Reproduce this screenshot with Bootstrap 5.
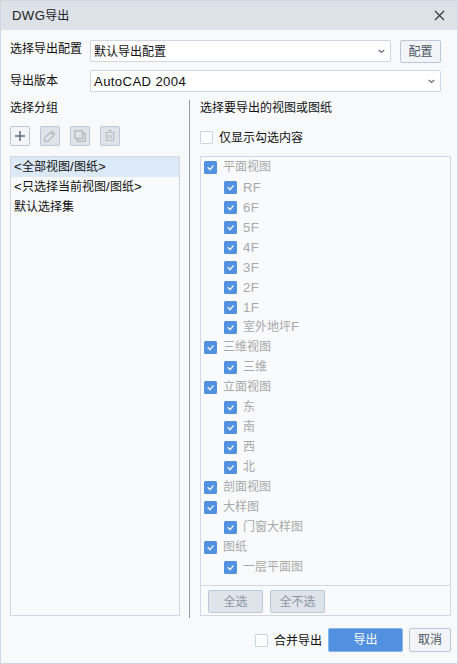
<!DOCTYPE html>
<html lang="zh-CN">
<head>
<meta charset="utf-8">
<title>DWG导出</title>
<link href="https://cdn.jsdelivr.net/npm/bootstrap@5.3.0/dist/css/bootstrap.min.css" rel="stylesheet">
<style>
body{font-family:"Liberation Sans","Noto Sans CJK SC",sans-serif;font-size:12px;line-height:20px;color:#111;background:#f7f9fb}
.dialog{width:458px;height:664px;border:1px solid #d0d6e2;background:#f7f9fb;overflow:hidden}
.titlebar{height:29px;background:#dde1e8;padding:0 12px 0 11px;color:#222}
.title-text{padding-top:1px}
.lt{font-size:13.2px;line-height:1;letter-spacing:.35px}
.body-area{padding:10px 6px 0 9px}
.form-line{height:30px}
.form-label-cell{width:80px;height:22px;line-height:18px}
.line-two .form-label-cell{line-height:22px}
.picker{height:22px;line-height:20px;border:1px solid #d0d6e2;border-radius:2px;background:#fff;padding:0 5px 0 3px}
.picker span{padding-top:1px}
.picker-one{width:301px}
.picker-two{width:351px}
.dlg-btn{--bs-btn-font-size:12px;--bs-btn-line-height:21px;--bs-btn-padding-x:0;--bs-btn-padding-y:0;--bs-btn-border-radius:2px;--bs-btn-color:#4b5563;--bs-btn-bg:#f2f4f8;--bs-btn-border-color:#bcc8da;--bs-btn-disabled-color:#8d96a5;--bs-btn-disabled-bg:#dfe3ea;--bs-btn-disabled-border-color:#bcc8da;--bs-btn-disabled-opacity:1}
.dlg-btn.btn-config,.dlg-btn.btn-all{padding-top:1px}
.dlg-btn.btn-export,.dlg-btn.btn-cancel{padding-top:1px}
.btn-config{width:41px;height:23px;margin-left:9px}
.btn-all{width:55px;height:23px}
.btn-export{width:75px;height:24px;--bs-btn-color:#fff;--bs-btn-bg:#5191df;--bs-btn-border-color:#8ab5ec}
.btn-cancel{width:42px;height:24px}
.tool{width:20px;height:20px}
.toolbar{gap:10px;margin:10px 0}
.left-pane{width:170px}
.divider{width:1px;height:518px;background:#999;margin:0 10px 0 9px}
.right-pane{width:251px}
.heading{height:16px;line-height:17px}
.filter-line{gap:6px;height:20px;margin:11px 0 9px}
.filter-line span+span,.action-line span+span{padding-top:1px}
.boxed{height:460px;border:1px solid #d2d7e3;background:#f8fafc}
.boxed .item{height:20px;line-height:21px;padding-left:3px}
.boxed .item.chosen{background:#dce9f8}
.tick{width:13px;height:13px;border:1px solid #ccd4e0;border-radius:1px;background:#fff;flex:none}
.tick-on{width:13px;height:13px;flex:none;display:block}
.tree{height:428px;color:#a7a9ab}
.tree .item{gap:6px}
.tree .item>span{padding-top:1px}
.tree .child{padding-left:23px}
.tree-foot{border-top:1px solid #d0d6e2;height:30px;padding:4px 7px;gap:7px}
.action-line{gap:6px;margin-top:10px}
</style>
<script src="https://cdn.jsdelivr.net/npm/bootstrap@5.3.0/dist/js/bootstrap.bundle.min.js"></script>
</head>
<body>
<svg class="d-none"><symbol id="on" viewBox="0 0 13 13"><rect width="13" height="13" rx="1.5" fill="#5191df"/><path d="M3.7 6.3 6 8.6 9.5 4.5" fill="none" stroke="#e6f0fb" stroke-width="1.4"/></symbol></svg>
<div class="dialog">
  <div class="titlebar d-flex align-items-center justify-content-between">
    <div class="title-text"><span class="lt">DWG</span>导出</div>
    <svg width="11" height="11" viewBox="0 0 11 11"><path d="M1 1 10 10M10 1 1 10" stroke="#333" stroke-width="1.1"/></svg>
  </div>
  <div class="body-area">
    <div class="form-line d-flex">
      <div class="form-label-cell">选择导出配置</div>
      <div class="picker picker-one d-flex align-items-center justify-content-between"><span>默认导出配置</span><svg width="7" height="5" viewBox="0 0 7 5"><path d="M.7 1 3.5 3.4 6.3 1" fill="none" stroke="#707c8c" stroke-width="1.4"/></svg></div>
      <button class="btn dlg-btn btn-config">配置</button>
    </div>
    <div class="form-line line-two d-flex">
      <div class="form-label-cell">导出版本</div>
      <div class="picker picker-two d-flex align-items-center justify-content-between"><span class="lt">AutoCAD 2004</span><svg width="7" height="5" viewBox="0 0 7 5"><path d="M.7 1 3.5 3.4 6.3 1" fill="none" stroke="#707c8c" stroke-width="1.4"/></svg></div>
    </div>
    <div class="d-flex">
      <div class="left-pane">
        <div class="heading">选择分组</div>
        <div class="toolbar d-flex">
          <button class="btn dlg-btn tool d-flex align-items-center justify-content-center"><svg width="18" height="18" viewBox="0 0 18 18"><path d="M9 4v10M4 9h10" stroke="#5a6b7d" stroke-width="1.5"/></svg></button>
          <button class="btn dlg-btn tool d-flex align-items-center justify-content-center" disabled><svg width="18" height="18" viewBox="0 0 18 18" fill="none" stroke="#b9bdc3" stroke-width="1.3"><path d="M3.7 14.3V11L9.5 5.2 12.8 8.5 7 14.3ZM10.6 3.7 14.3 7.4"/></svg></button>
          <button class="btn dlg-btn tool d-flex align-items-center justify-content-center" disabled><svg width="18" height="18" viewBox="0 0 18 18" fill="none" stroke="#b9bdc3" stroke-width="1.5"><path d="M3.8 3.8h7.7v7.7H3.8zM12 6.5h2.2v7.7H6.5V12"/></svg></button>
          <button class="btn dlg-btn tool d-flex align-items-center justify-content-center" disabled><svg width="18" height="18" viewBox="0 0 18 18" fill="none" stroke="#b9bdc3" stroke-width="1.2"><path d="M4 5.5h10M7 3.6h4M5.3 5.5v8h7.4v-8M7.8 8v3.5M10.2 8v3.5"/></svg></button>
        </div>
        <div class="boxed">
          <div class="item chosen"><span class="lt">&lt;</span>全部视图<span class="lt">/</span>图纸<span class="lt">&gt;</span></div>
          <div class="item"><span class="lt">&lt;</span>只选择当前视图<span class="lt">/</span>图纸<span class="lt">&gt;</span></div>
          <div class="item">默认选择集</div>
        </div>
      </div>
      <div class="divider"></div>
      <div class="right-pane">
        <div class="heading">选择要导出的视图或图纸</div>
        <div class="filter-line d-flex align-items-center"><span class="tick"></span><span>仅显示勾选内容</span></div>
        <div class="boxed">
          <div class="tree">
            <div class="item d-flex align-items-center"><svg class="tick-on"><use href="#on"/></svg><span>平面视图</span></div>
            <div class="item child d-flex align-items-center"><svg class="tick-on"><use href="#on"/></svg><span class="lt">RF</span></div>
            <div class="item child d-flex align-items-center"><svg class="tick-on"><use href="#on"/></svg><span class="lt">6F</span></div>
            <div class="item child d-flex align-items-center"><svg class="tick-on"><use href="#on"/></svg><span class="lt">5F</span></div>
            <div class="item child d-flex align-items-center"><svg class="tick-on"><use href="#on"/></svg><span class="lt">4F</span></div>
            <div class="item child d-flex align-items-center"><svg class="tick-on"><use href="#on"/></svg><span class="lt">3F</span></div>
            <div class="item child d-flex align-items-center"><svg class="tick-on"><use href="#on"/></svg><span class="lt">2F</span></div>
            <div class="item child d-flex align-items-center"><svg class="tick-on"><use href="#on"/></svg><span class="lt">1F</span></div>
            <div class="item child d-flex align-items-center"><svg class="tick-on"><use href="#on"/></svg><span>室外地坪<span class="lt">F</span></span></div>
            <div class="item d-flex align-items-center"><svg class="tick-on"><use href="#on"/></svg><span>三维视图</span></div>
            <div class="item child d-flex align-items-center"><svg class="tick-on"><use href="#on"/></svg><span>三维</span></div>
            <div class="item d-flex align-items-center"><svg class="tick-on"><use href="#on"/></svg><span>立面视图</span></div>
            <div class="item child d-flex align-items-center"><svg class="tick-on"><use href="#on"/></svg><span>东</span></div>
            <div class="item child d-flex align-items-center"><svg class="tick-on"><use href="#on"/></svg><span>南</span></div>
            <div class="item child d-flex align-items-center"><svg class="tick-on"><use href="#on"/></svg><span>西</span></div>
            <div class="item child d-flex align-items-center"><svg class="tick-on"><use href="#on"/></svg><span>北</span></div>
            <div class="item d-flex align-items-center"><svg class="tick-on"><use href="#on"/></svg><span>剖面视图</span></div>
            <div class="item d-flex align-items-center"><svg class="tick-on"><use href="#on"/></svg><span>大样图</span></div>
            <div class="item child d-flex align-items-center"><svg class="tick-on"><use href="#on"/></svg><span>门窗大样图</span></div>
            <div class="item d-flex align-items-center"><svg class="tick-on"><use href="#on"/></svg><span>图纸</span></div>
            <div class="item child d-flex align-items-center"><svg class="tick-on"><use href="#on"/></svg><span>一层平面图</span></div>
          </div>
          <div class="tree-foot d-flex">
            <button class="btn dlg-btn btn-all" disabled>全选</button>
            <button class="btn dlg-btn btn-all" disabled>全不选</button>
          </div>
        </div>
      </div>
    </div>
    <div class="action-line d-flex align-items-center justify-content-end">
      <span class="tick"></span><span>合并导出</span>
      <button class="btn dlg-btn btn-export">导出</button>
      <button class="btn dlg-btn btn-cancel">取消</button>
    </div>
  </div>
</div>
</body>
</html>
